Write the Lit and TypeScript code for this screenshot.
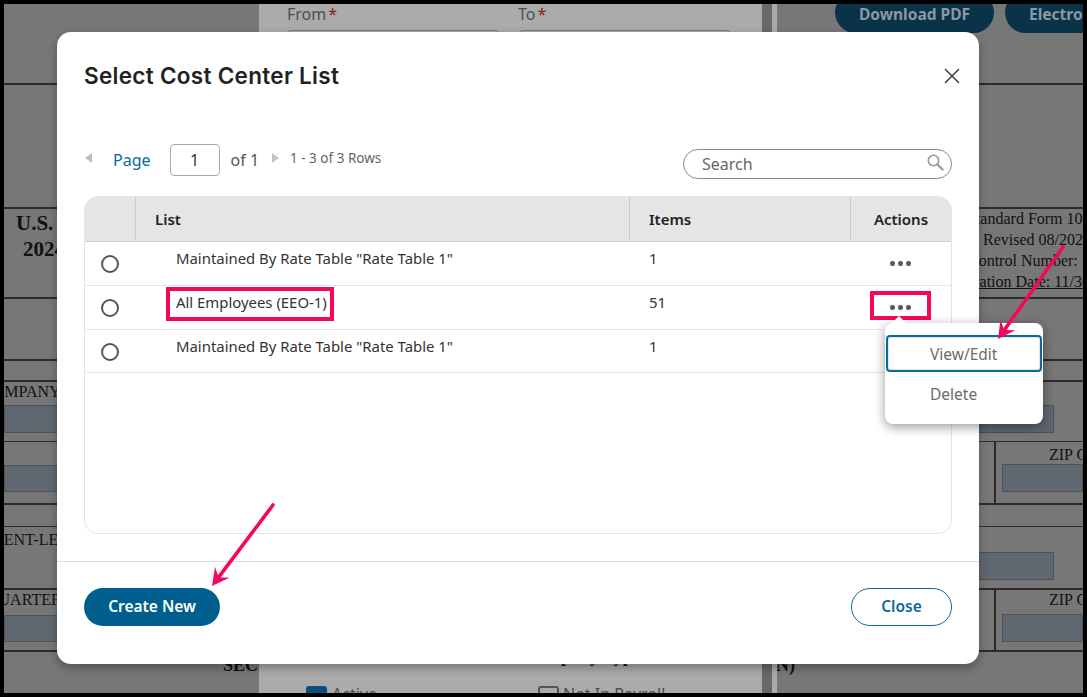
import { LitElement, html, css, svg } from "lit";
import { customElement } from "lit/decorators.js";

type Box = [number, number, number, number];
const LINES: Box[] = [
  [0, 79, 255, 2], [773, 79, 306, 2],
  [0, 203, 255, 2], [773, 203, 306, 2],
  [0, 293, 255, 2], [773, 293, 306, 2],
  [0, 355, 255, 2], [773, 355, 306, 2],
  [0, 376, 255, 2], [773, 376, 306, 2],
  [0, 437, 255, 1], [773, 437, 306, 1],
  [0, 499, 255, 2], [773, 499, 306, 2],
  [0, 522, 255, 1], [773, 522, 306, 1],
  [0, 584, 255, 2], [773, 584, 306, 2],
  [0, 646, 255, 2], [773, 646, 306, 2],
  [990, 437, 2, 62], [990, 584, 2, 62],
];
const FIELDS: Box[] = [
  [0, 401, 255, 28], [773, 401, 277, 28],
  [0, 461, 255, 27], [998, 460, 81, 28],
  [0, 611, 255, 27], [998, 610, 81, 28],
  [773, 548, 277, 28],
];
const TEXTS: [number, number, string, string][] = [
  [12, 208, "U.S.", "h"],
  [19, 234, "2024", "h"],
  [-22, 377, "COMPANY", ""],
  [-26, 525, "CLIENT-LEVEL", ""],
  [-17, 585, "QUARTERLY", ""],
  [963, 204, "Standard Form 100", ""],
  [979, 225, "Revised 08/2023", ""],
  [964, 246, "Control Number:", ""],
  [940, 267, "Expiration Date: 11/30", "u"],
  [1045, 440, "ZIP Code", ""],
  [1045, 585, "ZIP Code", ""],
  [219, 650, "SECTION", "b"],
  [766, 650, "(N)", "b"],
];

@customElement("app-root")
export class AppRoot extends LitElement {
  static styles = css`
    :host { display: block; width: 1087px; height: 697px; font-family: "Noto Sans", sans-serif; overflow: hidden; }
    .frame { position: relative; width: 1087px; height: 697px; box-sizing: border-box; border: 4px solid #000; background: #777; overflow: hidden; }
    .doc { position: absolute; inset: 0; }
    .line { position: absolute; background: #2c2c2c; }
    .field { position: absolute; background: #5f6770; border: 1px solid #4f5358; box-sizing: border-box; }
    .dt { position: absolute; font: 16px/22px "Liberation Serif", serif; color: #111; white-space: nowrap; }
    .dt.b { font-weight: 700; font-size: 18px; }
    .dt.h { font-weight: 700; font-size: 21px; }
    .dt.u { text-decoration: underline; }
    .panel { position: absolute; left: 255px; top: 0; width: 518px; height: 693px; background: #ababab; }
    .strip { position: absolute; left: 503px; top: 0; width: 10px; height: 100%; background: #696969; }
    .lbl { position: absolute; top: 0; font-size: 16px; line-height: 20px; color: #4f4f4f; white-space: nowrap; }
    .lbl i { color: #8a1c1c; font-style: normal; margin-left: 2px; }
    .inp { position: absolute; top: 26px; height: 40px; border: 1px solid #7d7d7d; border-radius: 5px; box-sizing: border-box; }
    .cb { position: absolute; top: 682px; width: 21px; height: 21px; border-radius: 3px; box-sizing: border-box; }
    .cb.on { left: 47px; background: #0a4f78; }
    .cb.off { left: 279px; border: 2px solid #555; }
    .cbt { position: absolute; top: 680px; font-size: 16px; line-height: 20px; color: #4d4d4d; white-space: nowrap; }
    .pill { position: absolute; top: -12px; height: 41px; box-sizing: border-box; padding-top: 12px; border-radius: 21px; background: #0a3349; color: #8b98a1; font-weight: 700; font-size: 15.5px; line-height: 20px; text-align: center; white-space: nowrap; overflow: hidden; }
    .pill.next { text-align: left; padding-left: 24px; }

    .modal { position: absolute; left: 53px; top: 28px; width: 922px; height: 632px; background: #fff; border-radius: 14px; box-shadow: 0 4px 10px rgba(0,0,0,.3); display: flex; flex-direction: column; }
    .head { height: 112px; flex: none; padding: 28px 19px 0 27px; box-sizing: border-box; display: flex; justify-content: space-between; align-items: flex-start; }
    h1 { margin: 0; font: 600 22.5px/32px Inter, sans-serif; letter-spacing: 0.3px; color: #222; }
    .x { margin-top: 8px; width: 16px; height: 16px; display: block; }
    .toolbar { height: 32px; flex: none; margin: 0 27px 20px; display: flex; justify-content: space-between; }
    .pager { display: flex; align-items: center; font-size: 16px; color: #555; }
    .tri { width: 0; height: 0; border-top: 5px solid transparent; border-bottom: 5px solid transparent; margin-top: -4px; }
    .tri.l { border-right: 7px solid #bdbdbd; margin-left: 1px; }
    .tri.r { border-left: 7px solid #c4c4c4; margin-left: 13px; }
    .page { color: #0a6a9e; margin-left: 21px; }
    .num { width: 50px; height: 32px; box-sizing: border-box; border: 1px solid #aaa; border-radius: 4px; margin-left: 19px; display: flex; align-items: center; justify-content: center; color: #333; font-size: 16px; }
    .of { margin-left: 11px; }
    .rows { margin-left: 11px; font-size: 13.5px; color: #666; margin-top: -4px; }
    .search { width: 269px; height: 30px; margin-top: 5px; box-sizing: border-box; border: 1px solid #888; border-radius: 15px; display: flex; align-items: center; justify-content: space-between; padding: 0 7px 0 18px; font-size: 16px; color: #666; }
    .search svg { width: 18px; height: 18px; margin-top: -4px; }
    .table { flex: 1; margin: 0 27px; border: 1px solid #e4e4e4; border-radius: 14px; overflow: hidden; min-height: 0; }
    .row { display: grid; grid-template-columns: 50px 494px 221px 1fr; border-bottom: 1px solid #e6e6e6; height: 43px; font-size: 14.9px; color: #333; }
    .row.last { height: 42px; }
    .row.hd { background: #e5e5e5; height: 44px; border-bottom: 1px solid #cfcfcf; font-size: 15px; font-weight: 600; color: #222; align-items: stretch; }
    .hd > div { display: flex; align-items: center; padding-left: 19px; border-left: 1px solid #cdcdcd; }
    .hd > div:first-child { border-left: none; }
    .hd > div:last-child { padding-left: 0; justify-content: center; }
    .rad { display: flex; align-items: flex-start; justify-content: center; padding-top: 13px; }
    .rad span { width: 18px; height: 18px; box-sizing: border-box; border: 2px solid #555; border-radius: 50%; display: block; }
    .name { padding: 6px 0 0 41px; line-height: 20px; white-space: nowrap; }
    .cnt { padding: 6px 0 0 20px; line-height: 20px; }
    .act { display: flex; justify-content: center; gap: 3.5px; padding-top: 19px; box-sizing: border-box; }
    .act i { width: 4.5px; height: 4.5px; border-radius: 50%; background: #5a5a5a; display: block; }
    .foot { flex: none; margin-top: 27px; border-top: 1px solid #ddd; padding: 26px 27px 38px; display: flex; justify-content: space-between; }
    .btn { height: 38px; box-sizing: border-box; border-radius: 19px; display: flex; align-items: center; justify-content: center; padding-bottom: 2px; font-size: 15.5px; font-weight: 600; }
    .btn.p { width: 136px; background: #005f8f; color: #fff; }
    .btn.s { width: 101px; border: 1px solid #0a6a9e; color: #0a6a9e; background: #fff; }

    .menu { position: absolute; left: 881px; top: 319px; width: 158px; height: 101px; background: #fff; border-radius: 8px; box-shadow: 0 3px 12px rgba(0,0,0,.4); box-sizing: border-box; padding-top: 12px; font-size: 15.5px; color: #6b6b6b; }
    .menu::before { content: ""; position: absolute; left: 9px; top: -5px; width: 10px; height: 10px; background: #fff; transform: rotate(45deg); }
    .mi { position: relative; height: 37px; box-sizing: border-box; margin: 0 1px; display: flex; align-items: center; padding-left: 44px; }
    .mi.on { border: 2px solid #0a6a9e; border-radius: 4px; padding-left: 42px; box-shadow: inset 0 0 0 1px #d5e8f2; }
    .mi.d { margin-top: 3px; }
    .mark { position: absolute; border: 4px solid #f5085c; box-sizing: border-box; }
    .m1 { left: 162px; top: 283px; width: 168px; height: 34px; }
    .m2 { left: 866px; top: 287px; width: 61px; height: 29px; }
    .arrows { position: absolute; left: -4px; top: -4px; width: 1087px; height: 697px; pointer-events: none; }
  `;

  private arrow(x1: number, y1: number, x2: number, y2: number) {
    const a = Math.atan2(y2 - y1, x2 - x1);
    const p = (d: number, o: number) =>
      `${x2 - Math.cos(a) * d - Math.sin(a) * o},${y2 - Math.sin(a) * d + Math.cos(a) * o}`;
    return svg`<line x1=${x1} y1=${y1} x2=${x2 - Math.cos(a) * 8} y2=${y2 - Math.sin(a) * 8} stroke="#f5085c" stroke-width="3.6" stroke-linecap="round"/>
      <polygon points="${x2},${y2} ${p(17, 9)} ${p(11, 0)} ${p(17, -9)}" fill="#f5085c"/>`;
  }

  private row(name: string, n: string, last = false) {
    return html`<div class="row ${last ? "last" : ""}">
      <div class="rad"><span></span></div>
      <div class="name">${name}</div>
      <div class="cnt">${n}</div>
      <div class="act"><i></i><i></i><i></i></div>
    </div>`;
  }

  render() {
    const st = (b: Box) => `left:${b[0]}px;top:${b[1]}px;width:${b[2]}px;height:${b[3]}px`;
    return html`<div class="frame">
      <div class="doc">
        ${LINES.map((l) => html`<div class="line" style=${st(l)}></div>`)}
        ${FIELDS.map((f) => html`<div class="field" style=${st(f)}></div>`)}
        ${TEXTS.map(
          (t) => html`<div class="dt ${t[3]}" style="left:${t[0]}px;top:${t[1]}px">${t[2]}</div>`
        )}
        <div class="panel">
          <div class="lbl" style="left:28px">From<i>*</i></div>
          <div class="lbl" style="left:259px">To<i>*</i></div>
          <div class="inp" style="left:27px;width:214px"></div>
          <div class="inp" style="left:259px;width:213px"></div>
          <div class="strip"></div>
          <div class="dt b" style="left:265px;top:641px">Company Type</div>
          <div class="cb on"></div>
          <div class="cb off"></div>
          <div class="cbt" style="left:73px">Active</div>
          <div class="cbt" style="left:304px">Not In Payroll</div>
        </div>
        <div class="pill" style="left:831px;width:159px">Download PDF</div>
        <div class="pill next" style="left:1001px;width:150px">Electronic</div>
      </div>

      <div class="modal">
        <div class="head">
          <h1>Select Cost Center List</h1>
          <svg class="x" viewBox="0 0 16 16"><path d="M1 1L15 15M15 1L1 15" stroke="#444" stroke-width="1.6" fill="none"/></svg>
        </div>
        <div class="toolbar">
          <div class="pager">
            <span class="tri l"></span>
            <span class="page">Page</span>
            <span class="num">1</span>
            <span class="of">of 1</span>
            <span class="tri r"></span>
            <span class="rows">1 - 3 of 3 Rows</span>
          </div>
          <div class="search">
            <span>Search</span>
            <svg viewBox="0 0 18 18"><circle cx="7.5" cy="7.5" r="5.2" fill="none" stroke="#999" stroke-width="1.6"/><path d="M11.5 11.5L16.5 16.5" stroke="#999" stroke-width="2.4" stroke-linecap="round"/></svg>
          </div>
        </div>
        <div class="table">
          <div class="row hd"><div></div><div>List</div><div>Items</div><div>Actions</div></div>
          ${this.row('Maintained By Rate Table "Rate Table 1"', "1")}
          ${this.row("All Employees (EEO-1)", "51")}
          ${this.row('Maintained By Rate Table "Rate Table 1"', "1", true)}
        </div>
        <div class="foot">
          <div class="btn p">Create New</div>
          <div class="btn s">Close</div>
        </div>
      </div>

      <div class="mark m1"></div>
      <div class="mark m2"></div>
      <div class="menu">
        <div class="mi on">View/Edit</div>
        <div class="mi d">Delete</div>
      </div>
      <svg class="arrows" viewBox="0 0 1087 697">
        ${this.arrow(1063, 247, 998, 339)}
        ${this.arrow(273, 505, 212, 586)}
      </svg>
    </div>`;
  }
}
